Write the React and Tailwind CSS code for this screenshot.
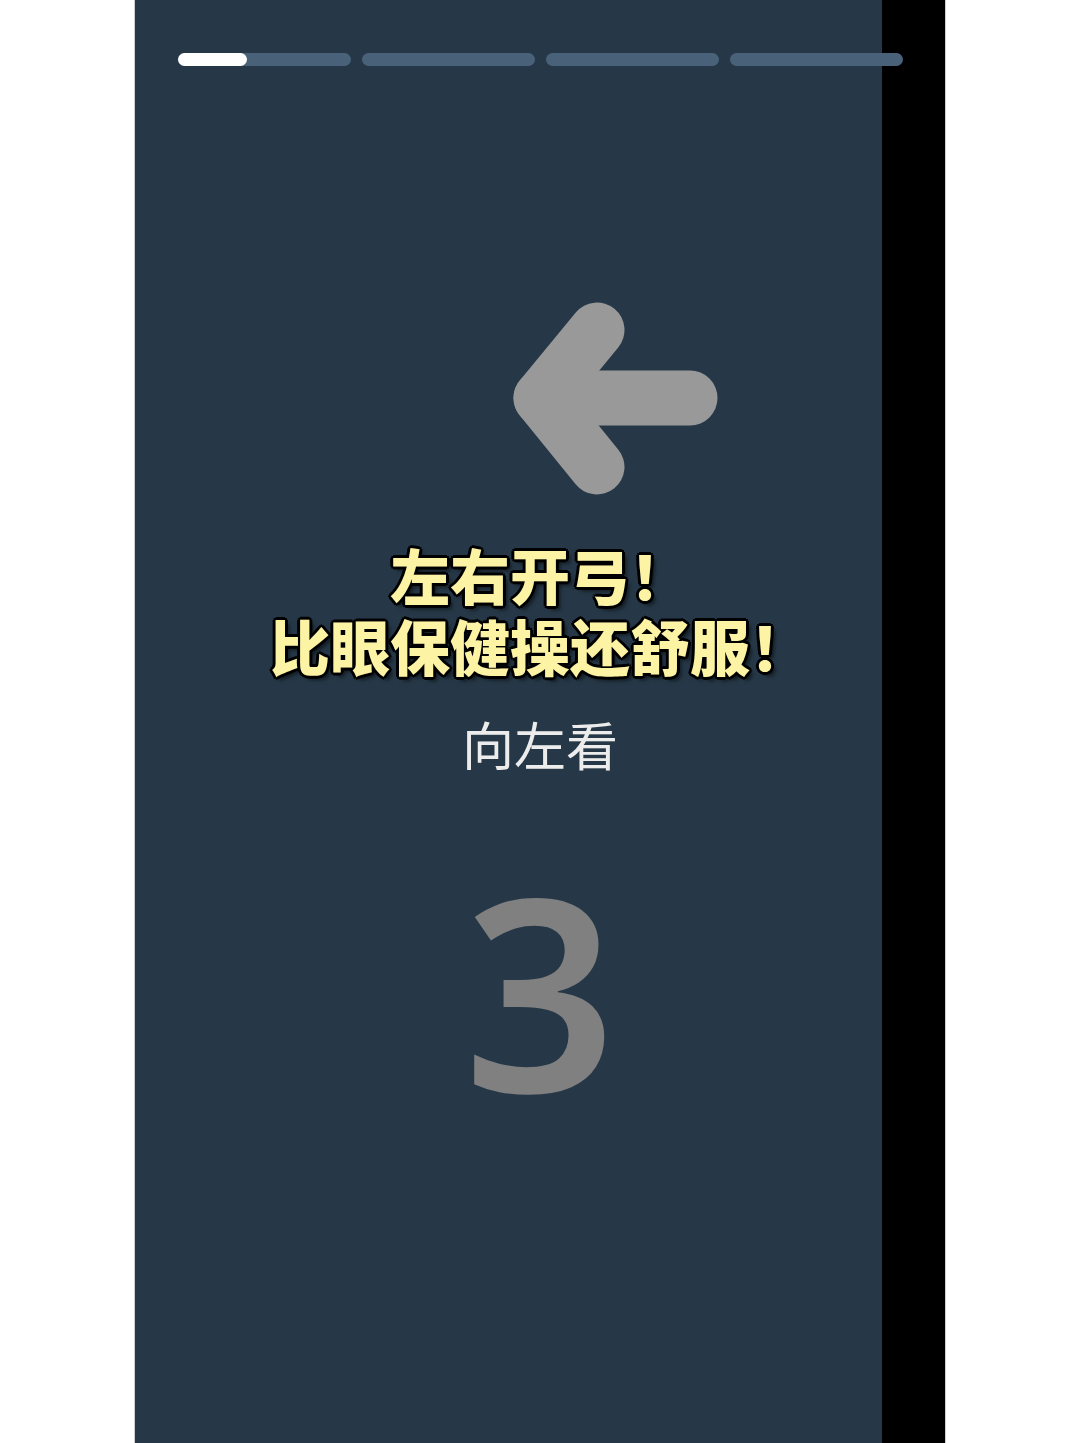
import React from "react";

const BARS = [0, 1, 2, 3];

const App = () => {
  return (
    <div className="flex min-h-[1443px] bg-white font-['Noto_Sans_CJK_SC',sans-serif]">
      {/* left white margin */}
      <div className="w-[134px] shrink-0" />

      {/* story panel */}
      <div className="relative w-[812px] shrink-0 border-x border-[#cfcfcf] bg-[#263847]">
        {/* black strip on the right edge */}
        <div className="absolute inset-y-0 right-0 w-[63px] bg-black" />

        <div className="relative flex flex-col items-center">
          {/* progress bars */}
          <div className="mt-[53px] flex w-[725px] gap-[11px]">
            {BARS.map((i) => (
              <div key={i} className="h-[13px] flex-1 rounded-full bg-[#4a6279]">
                {i === 0 && <div className="h-full w-[69px] rounded-full bg-white" />}
              </div>
            ))}
          </div>

          {/* arrow */}
          <svg
            className="mt-[236px] self-start ml-[378px]"
            width="206"
            height="194"
            viewBox="0 0 206 194"
            fill="none"
            stroke="#999999"
            strokeWidth="55"
            strokeLinecap="round"
            strokeLinejoin="round"
          >
            <polyline points="84,28 28,96 84,165" />
            <line x1="28" y1="96" x2="177" y2="96" />
          </svg>

          {/* title */}
          <div className="mt-[42px] text-center text-[60px] leading-[71px] font-black text-[#fdf3a4] [text-shadow:3px_0_0_#000,-3px_0_0_#000,0_3px_0_#000,0_-3px_0_#000,2px_2px_0_#000,-2px_-2px_0_#000,2px_-2px_0_#000,-2px_2px_0_#000,4px_4px_4px_rgba(0,0,0,0.6)]">
            <div>左右开弓！</div>
            <div>比眼保健操还舒服！</div>
          </div>

          <div className="mt-[34px] text-[52px] leading-[60px] font-normal text-[#ececec]">
            向左看
          </div>

          {/* countdown */}
          <div className="mt-[81px] font-['Noto_Sans',sans-serif] text-[268px] leading-none font-semibold text-[#808080]">
            3
          </div>
        </div>
      </div>

      <div className="flex-1" />
    </div>
  );
};

export default App;
